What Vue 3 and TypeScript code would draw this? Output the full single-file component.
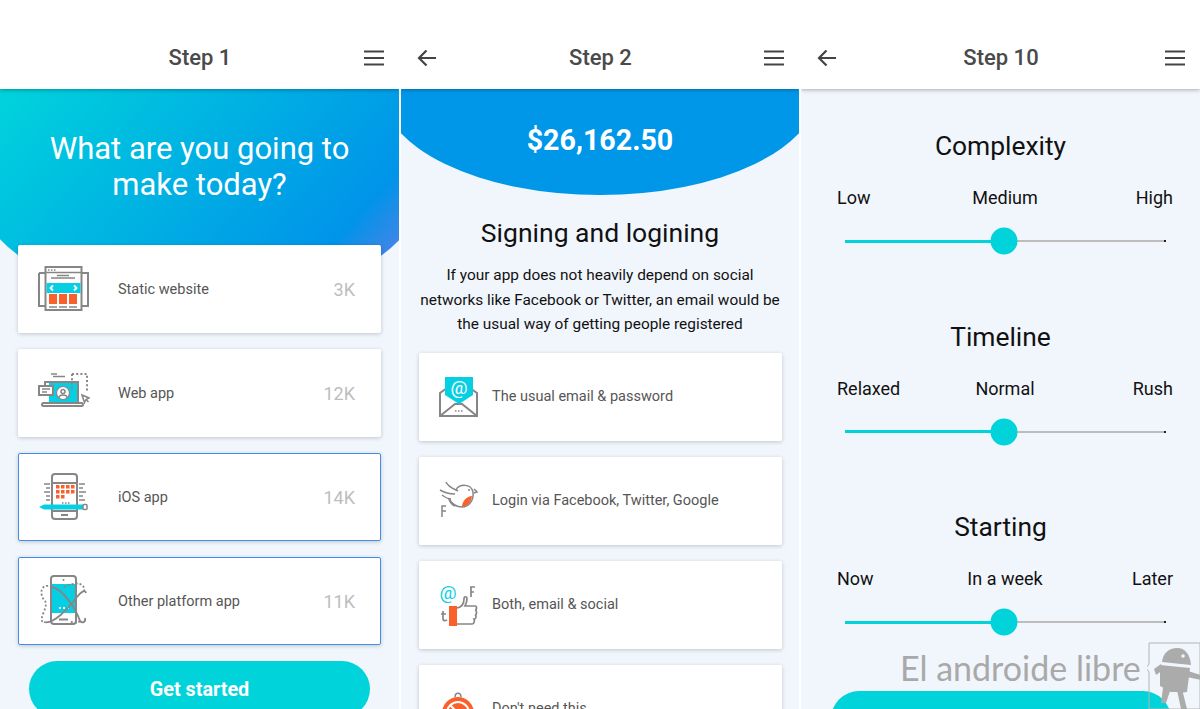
<script setup lang="ts">
interface Choice { key: string; label: string; value: string; selected: boolean }
interface Option { key: string; label: string }
interface Setting { title: string; labels: string[]; value: number }

const choices: Choice[] = [
  { key: 'site', label: 'Static website', value: '3K', selected: false },
  { key: 'web', label: 'Web app', value: '12K', selected: false },
  { key: 'ios', label: 'iOS app', value: '14K', selected: true },
  { key: 'other', label: 'Other platform app', value: '11K', selected: true },
]
const options: Option[] = [
  { key: 'mail', label: 'The usual email & password' },
  { key: 'bird', label: 'Login via Facebook, Twitter, Google' },
  { key: 'thumb', label: 'Both, email & social' },
  { key: 'none', label: "Don't need this" },
]
const settings: Setting[] = [
  { title: 'Complexity', labels: ['Low', 'Medium', 'High'], value: 49.5 },
  { title: 'Timeline', labels: ['Relaxed', 'Normal', 'Rush'], value: 49.5 },
  { title: 'Starting', labels: ['Now', 'In a week', 'Later'], value: 49.5 },
]
</script>

<template>
  <div class="screens">
    <!-- Step 1 -->
    <section class="panel">
      <header class="bar">
        <span class="slot"></span>
        <h1>Step 1</h1>
        <svg class="slot" width="20" height="16" viewBox="0 0 20 16"><path d="M0 1.5h20M0 8h20M0 14.5h20" stroke="#444" stroke-width="2.2" fill="none"/></svg>
      </header>
      <div class="hero hero-main">
        <h2>What are you going to make today?</h2>
      </div>
      <div class="cards cards-main">
        <div v-for="c in choices" :key="c.key" class="card" :class="{ selected: c.selected }">
          <svg v-if="c.key === 'site'" class="icon-l" width="52" height="48" viewBox="0 0 52 48">
            <g fill="none" stroke="#868686" stroke-width="2">
              <path d="M1 8v33h6M1 8h6M44 8h6v33h-6"/>
              <rect x="7.5" y="2" width="36" height="43" fill="#fff"/>
              <path d="M7.5 7.500h36M13 13h24M19 10.500h12M11 42h8M21 42h8M31 42h8" stroke-width="1.500"/>
            </g>
            <path d="M10 5h1.500M13 5h1.500M16 5h1.500" stroke="#868686" stroke-width="1.500"/>
            <rect x="8.500" y="18" width="34" height="10" fill="#07cfe3"/>
            <path d="M15 20.500l-2.500 2.500 2.500 2.500M36 20.500l2.500 2.500-2.500 2.500" stroke="#fff" stroke-width="1.800" fill="none"/>
            <rect x="11" y="29" width="8" height="10" fill="#f9602b"/>
            <rect x="21" y="29" width="8" height="10" fill="#f9602b"/>
            <rect x="31" y="29" width="8" height="10" fill="#f9602b"/>
          </svg>
          <svg v-else-if="c.key === 'web'" class="icon-l" width="52" height="48" viewBox="0 0 52 48">
            <rect x="11" y="14" width="30" height="20" fill="#07cfe3"/>
            <g fill="none" stroke="#868686" stroke-width="2">
              <path d="M7 24V13h33v21"/>
              <rect x="4" y="34" width="41" height="3" rx="1.500"/>
              <rect x="1" y="17" width="14" height="9" fill="#fff"/>
              <circle cx="25" cy="24" r="6.500" fill="#fff" stroke-width="1.200"/>
              <circle cx="25" cy="22.500" r="2" stroke-width="1.500"/>
              <path d="M21 29c0-4 8-4 8 0" stroke-width="1.500"/>
              <path d="M4 20h8M4 23h5M13 5h6M15 7.500h12" stroke-width="1.300"/>
              <path d="M34 5h15v17M34 5v17" stroke-dasharray="2 2.200"/>
              <path d="M44 26l7 3-3 1.500-1.500 3zM48 30.500l2.500 2.500" stroke-width="1.500"/>
            </g>
          </svg>
          <svg v-else-if="c.key === 'ios'" class="icon-l" width="52" height="48" viewBox="0 0 52 48">
            <g fill="none" stroke="#868686" stroke-width="2">
              <rect x="14" y="1" width="25" height="45" rx="3" fill="#fff"/>
              <path d="M14 10h25M14 38h25M23 42h7"/>
              <path d="M6 11h6M8 15h4M6 19h6M8 23h4M8 27h4M41 11h6M41 15h4M41 19h7M41 23h4M41 27h6" stroke-width="1.400"/>
              <path d="M24 30h1.500M27 30h1.500M30 30h1.500" stroke-width="1.400"/>
            </g>
            <g fill="#f9602b">
              <rect x="18" y="12" width="3.500" height="3.500"/><rect x="23" y="12" width="3.500" height="3.500"/><rect x="28" y="12" width="3.500" height="3.500"/><rect x="33" y="12" width="3.500" height="3.500"/>
              <rect x="18" y="17" width="3.500" height="3.500"/><rect x="23" y="17" width="3.500" height="3.500"/><rect x="28" y="17" width="3.500" height="3.500"/><rect x="33" y="17" width="3.500" height="3.500"/>
              <rect x="18" y="22" width="3.500" height="3.500"/><rect x="23" y="22" width="3.500" height="3.500"/>
            </g>
            <path d="M1 34l5-2.500h39v5H6z" fill="#07cfe3"/>
            <rect x="45" y="31.500" width="4" height="5" rx="1" fill="#fff" stroke="#868686" stroke-width="1.500"/>
          </svg>
          <svg v-else class="icon-l" width="52" height="52" viewBox="0 0 52 52">
            <g fill="none" stroke="#868686" stroke-width="2">
              <rect x="13" y="1" width="25" height="48" rx="3" fill="#fff"/>
              <path d="M21 44.500h9"/>
            </g>
            <rect x="14" y="9" width="23" height="29" fill="#07cfe3"/>
            <circle cx="25.500" cy="5" r="1" fill="#868686"/>
            <path d="M21 33h2M25 33h2M29 33h2" stroke="#fff" stroke-width="1.800"/>
            <g fill="none" stroke="#868686" stroke-width="1.800">
              <path d="M14 12C25 14 38 34 42 46c2 2 6 2 5-3"/>
              <path d="M6 47c9 3 25-14 33-25 4-5 8-8 9-4"/>
              <path d="M14 12c-12-5-13 8-7 14 4 5-7 18-2 21" stroke-dasharray="2 2"/>
              <path d="M26 12c12-6 22-4 20 5M42 46c-3 3-8 3-10-1" stroke-dasharray="2 2"/>
            </g>
          </svg>
          <span class="card-label">{{ c.label }}</span>
          <span class="card-value">{{ c.value }}</span>
        </div>
      </div>
      <button class="cta cta-main">Get started</button>
    </section>

    <!-- Step 2 -->
    <section class="panel">
      <header class="bar">
        <svg class="slot" width="20" height="18" viewBox="0 0 20 18"><path d="M19 9H2M9.500 1.500L2 9l7.500 7.500" stroke="#444" stroke-width="2.200" fill="none"/></svg>
        <h1>Step 2</h1>
        <svg class="slot" width="20" height="16" viewBox="0 0 20 16"><path d="M0 1.500h20M0 8h20M0 14.500h20" stroke="#444" stroke-width="2.200" fill="none"/></svg>
      </header>
      <div class="hero hero-price">$26,162.50</div>
      <h3 class="sign-title">Signing and logining</h3>
      <p class="sign-copy">If your app does not heavily depend on social networks like Facebook or Twitter, an email would be the usual way of getting people registered</p>
      <div class="cards cards-sign">
        <div v-for="o in options" :key="o.key" class="card card-sign">
          <svg v-if="o.key === 'mail'" class="icon-s" width="40" height="42" viewBox="0 0 40 42">
            <g fill="none" stroke="#868686" stroke-width="2">
              <path d="M1 17v23h37V17L19.500 4z"/>
              <path d="M1 40l15-12h7l15 12"/>
            </g>
            <path d="M16 35h1.500M19 35h1.500M22 35h1.500" stroke="#868686" stroke-width="1.300"/>
            <path d="M6 1h28v18L20 28 6 19z" fill="#07cfe3"/>
            <text x="20" y="18" text-anchor="middle" class="at at-white">@</text>
          </svg>
          <svg v-else-if="o.key === 'bird'" class="icon-s" width="40" height="42" viewBox="0 0 40 42">
            <g fill="none" stroke="#868686" stroke-width="1.500">
              <path d="M17 10c3-6 15-7 17 2 1 8-4 15-11 15-6 0-10-3-13-8"/>
              <path d="M7 2c2 5 8 7 12 9M1 10c5 3 11 4 15 4M3 15c4 3 6 4 9 4M10 19c1 3 3 6 6 7"/>
              <path d="M35 9l3 3-3 1M4 26h-1v11M3 31h4M3 26h4"/>
            </g>
            <path d="M23 27c0-6 5-11 10-11-1 6-4 10-10 11z" fill="#f9602b"/>
            <circle cx="30" cy="10" r="1" fill="#868686"/>
          </svg>
          <svg v-else-if="o.key === 'thumb'" class="icon-s" width="40" height="42" viewBox="0 0 40 42">
            <text x="9" y="15" text-anchor="middle" class="at at-teal">@</text>
            <rect x="10" y="22" width="8" height="20" fill="#f9602b"/>
            <g fill="none" stroke="#868686" stroke-width="1.700">
              <path d="M18 24c5-1 7-5 7-9 0-3 3-3 3 0 0 3-1 5-2 7h10c2 0 2 4 0 4 2 0 2 5 0 5 2 1 1 4-1 4 1 2 0 5-2 5H18"/>
              <path d="M31 3h5M32 3v10M32 8h3M4 27v8c0 2 2 2 4 1M2 30h5"/>
            </g>
          </svg>
          <svg v-else class="icon-s" width="40" height="42" viewBox="0 0 40 42">
            <circle cx="19" cy="25" r="16" fill="#f9602b"/>
            <path d="M16 9c0-5 6-5 6 0" fill="none" stroke="#868686" stroke-width="1.500"/>
            <circle cx="19" cy="25" r="11" fill="none" stroke="#fff" stroke-width="2"/>
            <path d="M11 17l16 16" stroke="#fff" stroke-width="2"/>
          </svg>
          <span class="card-label">{{ o.label }}</span>
        </div>
      </div>
    </section>

    <!-- Step 10 -->
    <section class="panel">
      <header class="bar">
        <svg class="slot" width="20" height="18" viewBox="0 0 20 18"><path d="M19 9H2M9.500 1.500L2 9l7.500 7.500" stroke="#444" stroke-width="2.200" fill="none"/></svg>
        <h1>Step 10</h1>
        <svg class="slot" width="20" height="16" viewBox="0 0 20 16"><path d="M0 1.500h20M0 8h20M0 14.500h20" stroke="#444" stroke-width="2.200" fill="none"/></svg>
      </header>
      <div class="settings">
        <div v-for="s in settings" :key="s.title" class="setting">
          <h3>{{ s.title }}</h3>
          <div class="scale">
            <span>{{ s.labels[0] }}</span>
            <span>{{ s.labels[1] }}</span>
            <span class="scale-end">{{ s.labels[2] }}</span>
          </div>
          <div class="track">
            <div class="fill" :style="{ width: s.value + '%' }"></div>
            <div class="thumb" :style="{ left: s.value + '%' }"></div>
            <div class="end-dot"></div>
          </div>
        </div>
      </div>
      <button class="cta cta-last"></button>
    </section>

    <div class="mark">
      <span class="mark-text">El androide libre</span>
      <svg class="mark-robot" width="54" height="67" viewBox="0 0 54 67">
        <path d="M2 22V1h51v66H2V30l-3-4z" fill="none" stroke="#b4b4b4" stroke-width="1" />
        <g fill="#ababab">
          <path d="M15 20c1-9 7-14 15-14s13 6 14 17z"/>
          <path d="M13 23l30 3-3 24-7 1-1-1-8 0-11-6z"/>
          <path d="M14 22l-7 5 2 6 7-5zM41 29l13 4v5l-14-3zM16 46l-2 15h5l5-15zM30 48l4 19h6l-5-20z"/>
        </g>
        <circle cx="36" cy="14" r="1.800" fill="#f1f6fd"/>
      </svg>
    </div>
  </div>
</template>

<style scoped>
.screens {
  position: relative;
  display: grid;
  grid-template-columns: 399px 398px 399px;
  gap: 2px;
  width: 1200px;
  height: 709px;
  overflow: hidden;
  background: #fff;
  font-family: Roboto, "Liberation Sans", sans-serif;
}
.panel {
  display: flex;
  flex-direction: column;
  height: 709px;
  overflow: hidden;
  background: #f1f6fd;
}
.bar {
  position: relative;
  z-index: 2;
  flex: none;
  display: flex;
  align-items: center;
  height: 89px;
  padding: 26px 15px 0 16px;
  box-sizing: border-box;
  background: #fff;
  box-shadow: 0 1px 4px rgba(0, 0, 0, 0.3);
}
.bar h1 {
  flex: 1;
  margin: 0;
  text-align: center;
  font-size: 22px;
  font-weight: 500;
  color: #4a4a4a;
}
.slot {
  flex: none;
  width: 20px;
}
.hero {
  flex: none;
  box-sizing: border-box;
  align-self: center;
  width: 438px;
  border-radius: 0 0 219px 219px / 0 0 106px 106px;
  color: #fff;
  text-align: center;
}
.hero-main {
  height: 213px;
  padding: 42px 60px 0;
  background: linear-gradient(132deg, #00d6db 0%, #0094e9 78%, #4a83e6 90%);
}
.hero-main h2 {
  margin: 0;
  font-size: 31px;
  font-weight: 400;
  line-height: 36px;
}
.hero-price {
  height: 106px;
  padding-top: 31px;
  background: #0097e9;
  font-size: 28.600px;
  font-weight: 700;
  line-height: 40px;
}
.cards {
  display: flex;
  flex-direction: column;
  flex: none;
}
.cards-main {
  gap: 16px;
  margin: -57px 18px 0;
  position: relative;
}
.cards-sign {
  gap: 16px;
  margin: 16px 17px 0 18px;
}
.card {
  flex: none;
  display: flex;
  align-items: center;
  height: 88px;
  padding: 0 25px 0 19px;
  box-sizing: border-box;
  background: #fff;
  border: 1px solid transparent;
  border-radius: 2px;
  box-shadow: 0 1px 4px rgba(0, 0, 0, 0.2);
}
.card.selected {
  border-color: #3f8fe9;
}
.icon-l {
  flex: none;
  margin-right: 28px;
}
.icon-s {
  flex: none;
  margin-right: 13px;
  overflow: visible;
}
.card-label {
  flex: 1;
  font-size: 14.500px;
  color: #565656;
}
.card-value {
  font-size: 18px;
  color: #bdbdbd;
}
.at {
  font-family: Roboto, sans-serif;
  font-size: 19px;
}
.at-white {
  fill: #fff;
}
.at-teal {
  fill: #07cfe3;
}
.cta {
  flex: none;
  display: block;
  height: 56px;
  padding: 0;
  border: 0;
  border-radius: 28px;
  background: #00d3da;
  color: #fff;
  font-family: inherit;
  font-size: 19.800px;
  font-weight: 700;
}
.cta-main {
  margin: 16px 29px 0;
}
.cta-last {
  margin: 0 29px 0 30px;
}
.sign-title {
  flex: none;
  margin: 21px 0 0;
  text-align: center;
  font-size: 26.500px;
  font-weight: 400;
  line-height: 34px;
  color: #111;
}
.sign-copy {
  flex: none;
  margin: 13px 14px 0;
  text-align: center;
  font-size: 15.400px;
  line-height: 24.500px;
  color: #111;
}
.settings {
  flex: none;
  display: flex;
  flex-direction: column;
  gap: 51.500px;
  padding-top: 40px;
  height: 602px;
  box-sizing: border-box;
}
.setting h3 {
  margin: 0;
  text-align: center;
  font-size: 26.400px;
  font-weight: 400;
  line-height: 34px;
  color: #111;
}
.scale {
  display: grid;
  grid-template-columns: 1fr auto 1fr;
  margin: 22px 27px 0 36px;
  font-size: 18px;
  line-height: 26px;
  color: #111;
}
.scale-end {
  text-align: right;
}
.track {
  position: relative;
  height: 2px;
  margin: 29px 34px 26px 44px;
  background: #bdbdbd;
}
.fill {
  position: absolute;
  left: 0;
  top: -0.500px;
  height: 3px;
  background: #00d3da;
}
.thumb {
  position: absolute;
  top: 1px;
  width: 27px;
  height: 27px;
  border-radius: 50%;
  background: #00d3da;
  transform: translate(-50%, -50%);
}
.end-dot {
  position: absolute;
  right: 0;
  top: 0;
  width: 2px;
  height: 2px;
  background: #222;
}
.mark {
  position: absolute;
  left: 900px;
  top: 642px;
  width: 300px;
  height: 67px;
}
.mark-text {
  position: absolute;
  left: 0;
  top: 3px;
  font-family: Lato, sans-serif;
  font-size: 34px;
  line-height: 46px;
  font-weight: 400;
  color: #a9a9a9;
  white-space: nowrap;
}
.mark-robot {
  position: absolute;
  left: 247px;
  top: 0;
}
</style>
